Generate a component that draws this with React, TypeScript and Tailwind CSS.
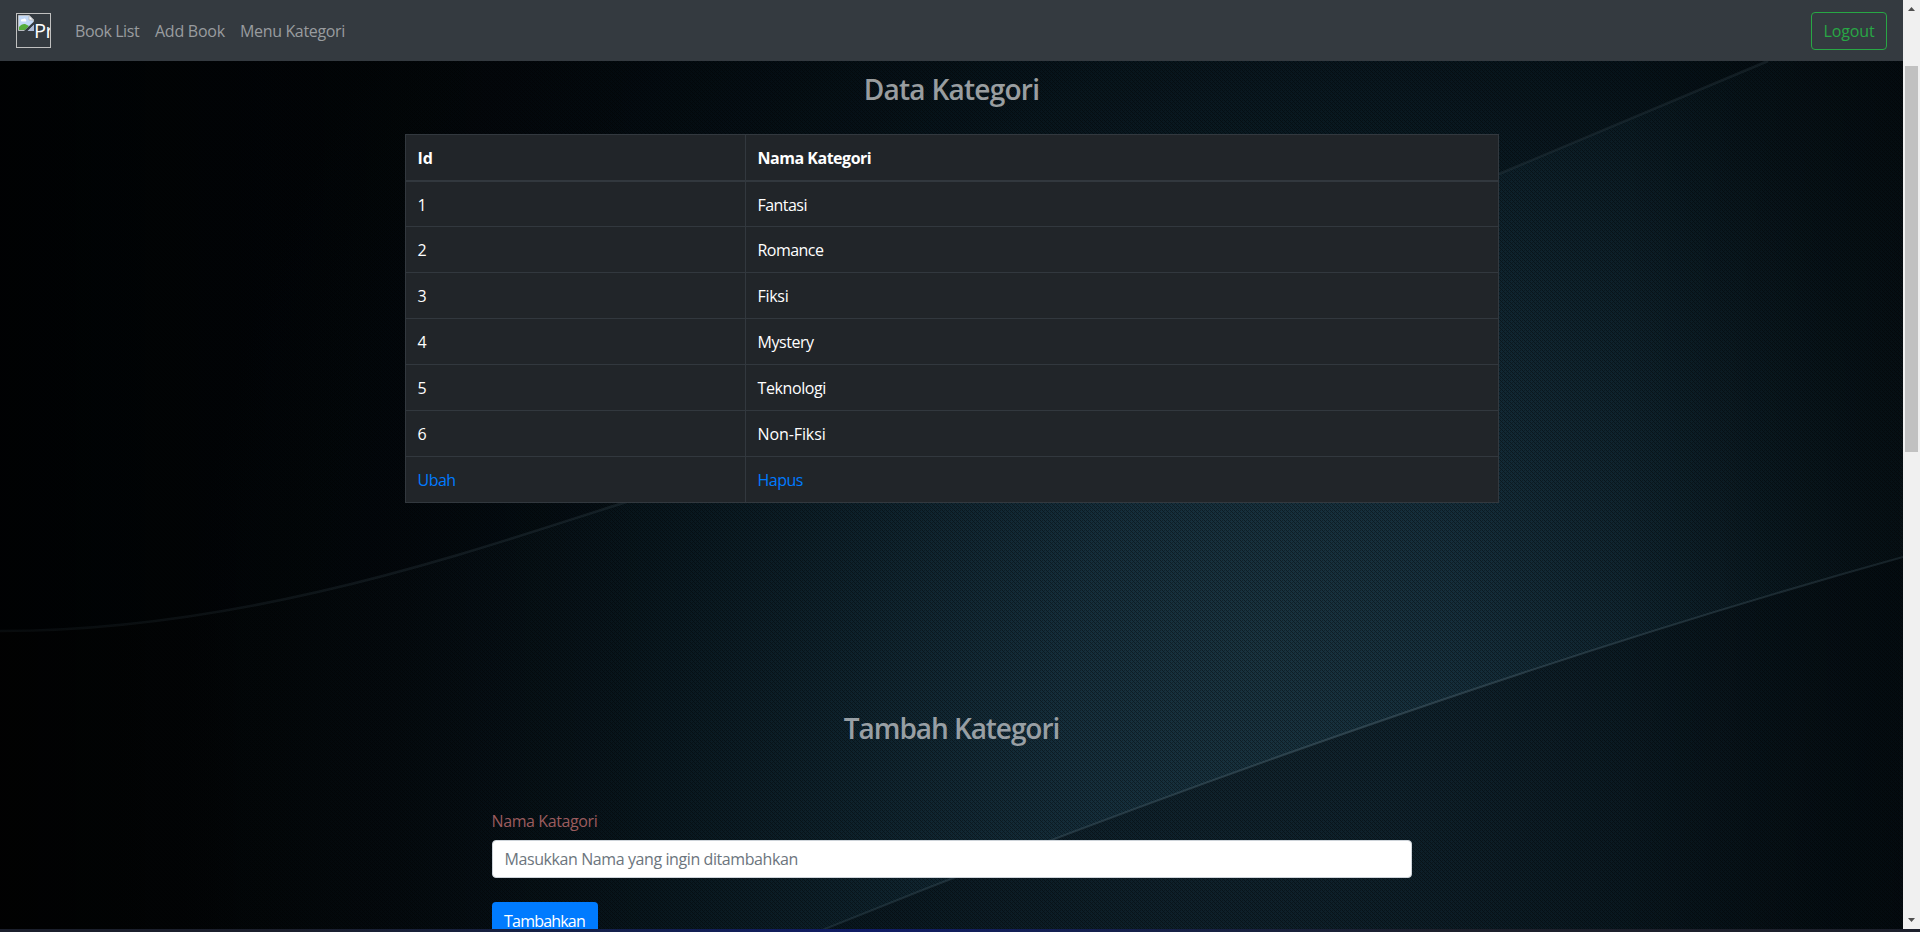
const categories = [
  { id: '1', name: 'Fantasi', tracking: 'tracking-[-0.55px]' },
  { id: '2', name: 'Romance', tracking: 'tracking-[-0.55px]' },
  { id: '3', name: 'Fiksi', tracking: 'tracking-[-0.3px]' },
  { id: '4', name: 'Mystery', tracking: 'tracking-[-0.45px]' },
  { id: '5', name: 'Teknologi', tracking: 'tracking-[-0.4px]' },
  { id: '6', name: 'Non-Fiksi', tracking: 'tracking-[-0.1px]' },
];

function Backdrop() {
  return (
    <svg className="absolute inset-0 -z-10" width="1903" height="929" viewBox="0 0 1903 929" aria-hidden="true">
      <defs>
        <radialGradient id="glow" gradientUnits="userSpaceOnUse" cx="0" cy="0" r="1" gradientTransform="translate(1260 650) rotate(-72) scale(1300 1060)">
          <stop offset="0" stopColor="#19333f" />
          <stop offset="0.18" stopColor="#152e3b" />
          <stop offset="0.38" stopColor="#0e222c" />
          <stop offset="0.58" stopColor="#08161d" />
          <stop offset="0.8" stopColor="#050c11" />
          <stop offset="1" stopColor="#030709" />
        </radialGradient>
        <linearGradient id="leftFade" x1="0" x2="1" y1="0" y2="0">
          <stop offset="0" stopColor="#000" stopOpacity="0.8" />
          <stop offset="0.14" stopColor="#000" stopOpacity="0.25" />
          <stop offset="0.35" stopColor="#000" stopOpacity="0" />
          <stop offset="0.85" stopColor="#000" stopOpacity="0" />
          <stop offset="1" stopColor="#000" stopOpacity="0.3" />
        </linearGradient>
        <linearGradient id="shade" gradientUnits="userSpaceOnUse" x1="1350" y1="735" x2="1480" y2="1050">
          <stop offset="0" stopColor="#000408" stopOpacity="0.32" />
          <stop offset="1" stopColor="#000408" stopOpacity="0.3" />
        </linearGradient>
        <linearGradient id="arcTop" gradientUnits="userSpaceOnUse" x1="0" x2="1780" y1="0" y2="0">
          <stop offset="0" stopColor="#33434b" stopOpacity="0.15" />
          <stop offset="0.3" stopColor="#33434b" stopOpacity="0.32" />
          <stop offset="1" stopColor="#33434b" stopOpacity="0.3" />
        </linearGradient>
        <linearGradient id="arcLow" gradientUnits="userSpaceOnUse" x1="820" x2="1903" y1="0" y2="0">
          <stop offset="0" stopColor="#4b626d" stopOpacity="0.25" />
          <stop offset="0.5" stopColor="#4b626d" stopOpacity="0.5" />
          <stop offset="1" stopColor="#4b626d" stopOpacity="0.25" />
        </linearGradient>
        <pattern id="weave" width="4" height="4" patternUnits="userSpaceOnUse">
          <path d="M0 0h1v1h1v1h1v1h1v1h-1v-1h-1v-1h-1v-1h-1z" fill="#000" fillOpacity="0.4" />
          <path d="M2 0h1v1h-1zM0 2h1v1h-1z" fill="#000" fillOpacity="0.28" />
        </pattern>
      </defs>
      <rect width="1903" height="929" fill="url(#glow)" />
      <rect width="1903" height="929" fill="url(#leftFade)" />
      <path d="M0 0H1903V0L1768 61L1499 174C1200 310 900 410 620 504C480 548 250 631 0 631Z" fill="#000306" fillOpacity="0.25" />
      <path d="M820 931C1150 797 1550 655 1903 557V931Z" fill="url(#shade)" />
      <rect width="1903" height="929" fill="url(#weave)" />
      <path d="M0 631C250 631 480 548 620 504C900 410 1200 310 1499 174L1768 61" fill="none" stroke="url(#arcTop)" strokeWidth="2.500" />
      <path d="M820 931C1150 797 1550 655 1903 557" fill="none" stroke="url(#arcLow)" strokeWidth="2" />
    </svg>
  );
}

function BrokenImageIcon() {
  return (
    <svg className="h-4 w-4 shrink-0" viewBox="0 0 16 16" aria-hidden="true">
      <path d="M0.5 0.5H11L15.5 5V8L7 15.5H0.5Z" fill="#c3d9f7" stroke="#b9bcc0" />
      <path d="M11 0.5V5H15.5Z" fill="#fff" stroke="#b9bcc0" />
      <path d="M3 5.500a1.300 1.300 0 0 1 2-1.200a1.600 1.600 0 0 1 3 .7a1 1 0 0 1 0 1.500H3.500a.8.8 0 0 1-.5-1z" fill="#fff" />
      <path d="M1 15V12C3 9.500 6 8.500 8 9.500L11 11L7 15Z" fill="#56ad3b" />
      <path d="M16 9V16H9.500Z" fill="#aebbd6" />
      <path d="M16 6.500L6 16H8.500L16 9.500Z" fill="#343a40" />
    </svg>
  );
}

function Navbar() {
  return (
    <nav className="flex h-[61px] items-center bg-[#343a40] px-4">
      <a href="#" className="mr-6 flex h-[35px] w-[35px] overflow-hidden border border-[#c0c0c0] text-xl leading-[31px] text-white">
        <span className="flex pl-px pt-px">
          <BrokenImageIcon />
          <span className="whitespace-nowrap tracking-[-0.5px]">Pr</span>
        </span>
      </a>
      <div className="flex flex-1 pt-px text-[#999c9f]">
        <a href="#" className="w-20 whitespace-nowrap tracking-[-0.4px]">Book List</a>
        <a href="#" className="w-[85px] whitespace-nowrap tracking-[-0.25px]">Add Book</a>
        <a href="#" className="whitespace-nowrap tracking-[-0.35px]">Menu Kategori</a>
      </div>
      <button className="h-[38px] w-[76px] rounded border border-[#28a745] pt-px tracking-[-0.15px] text-[#28a745]">Logout</button>
    </nav>
  );
}

function CategoryTable() {
  const cell = 'border-b border-r border-[#32383e] px-3 pb-0 pt-px align-middle';
  const headCell = 'border-b-2 border-r border-[#32383e] px-3 py-0 font-bold';
  return (
    <table className="mx-auto w-[1094px] table-fixed border-separate border-spacing-0 border-l border-t border-[#32383e] bg-[#212529] text-left text-white">
      <thead>
        <tr className="h-[47px]">
          <th className={`${headCell} w-[340px] tracking-[-0.1px]`}>Id</th>
          <th className={`${headCell} tracking-[-0.48px]`}>Nama Kategori</th>
        </tr>
      </thead>
      <tbody>
        {categories.map((c, i) => (
          <tr key={c.id} className={i === 0 ? 'h-[45px]' : 'h-[46px]'}>
            <td className={cell}>{c.id}</td>
            <td className={`${cell} ${c.tracking}`}>{c.name}</td>
          </tr>
        ))}
        <tr className="h-[46px] tracking-[-0.5px] text-[#007bff]">
          <td className={cell}><a href="#">Ubah</a></td>
          <td className={cell}><a href="#">Hapus</a></td>
        </tr>
      </tbody>
    </table>
  );
}

function AddCategory() {
  return (
    <form className="mx-auto flex w-[920px] flex-col items-start">
      <label className="mb-[7px] pt-px tracking-[-0.4px] text-[#9b5c5e]">Nama Katagori</label>
      <input
        type="text"
        placeholder="Masukkan Nama yang ingin ditambahkan"
        className="h-[38px] w-full rounded border border-[#ced4da] bg-white px-3 tracking-[-0.41px] placeholder:text-[#6c757d]"
      />
      <button type="button" className="mt-6 h-[38px] w-[106px] rounded bg-[#007bff] tracking-[-0.8px] text-white">Tambahkan</button>
    </form>
  );
}

function Scrollbar() {
  return (
    <div className="flex h-[929px] w-[17px] flex-col items-center bg-[#f0f0f0]">
      <svg className="h-[17px] w-[17px]" viewBox="0 0 17 17" aria-hidden="true">
        <path d="M5 11L8.500 7L12 11Z" fill="#505050" />
      </svg>
      <div className="mt-[49px] h-[386px] w-[13px] bg-[#c1c1c1]" />
      <svg className="mt-auto h-[17px] w-[17px]" viewBox="0 0 17 17" aria-hidden="true">
        <path d="M5 6L8.500 10L12 6Z" fill="#505050" />
      </svg>
    </div>
  );
}

export default function App() {
  return (
    <div className="h-[932px] w-[1920px] overflow-hidden bg-black font-['Open_Sans',sans-serif] text-base leading-6">
      <div className="flex">
        <div className="relative isolate h-[929px] w-[1903px] overflow-hidden">
          <Backdrop />
          <Navbar />
          <main>
            <h3 className="mt-[11px] h-[62px] text-center text-[28px] font-semibold leading-[34px] tracking-[-0.75px] text-white/60">Data Kategori</h3>
            <CategoryTable />
            <h3 className="mt-[208px] h-[97px] text-center text-[28px] font-semibold leading-[34px] tracking-[-1.07px] text-[#989fa4]">Tambah Kategori</h3>
            <AddCategory />
          </main>
        </div>
        <Scrollbar />
      </div>
      <div className="h-[3px] bg-linear-to-r from-[#1b1f2c] from-15% via-[#101c66] via-45% to-[#1d202c] to-75%" />
    </div>
  );
}
